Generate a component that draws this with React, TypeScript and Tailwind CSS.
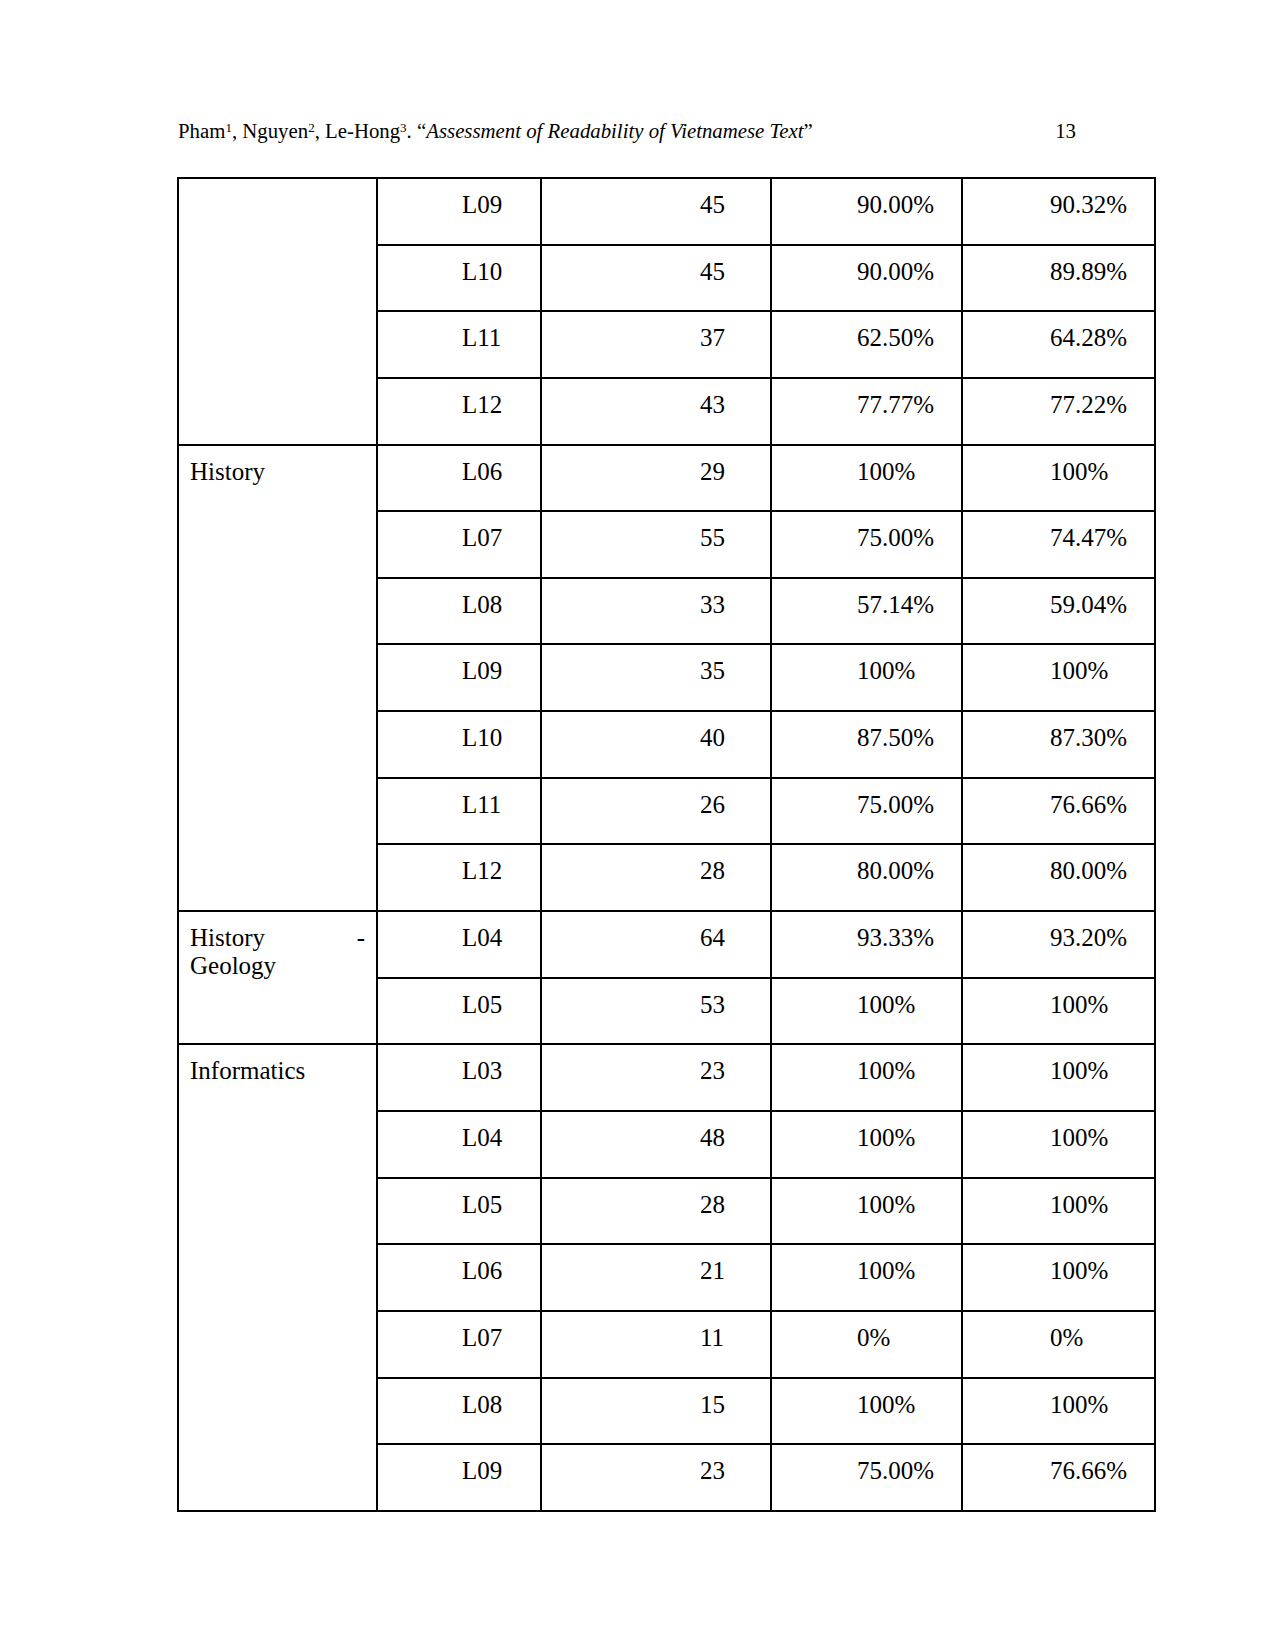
import React from "react";

type Row = [string, string, string, string];
type Group = { label: string | null; rows: Row[] };

const groups: Group[] = [
  {
    label: null,
    rows: [
      ["L09", "45", "90.00%", "90.32%"],
      ["L10", "45", "90.00%", "89.89%"],
      ["L11", "37", "62.50%", "64.28%"],
      ["L12", "43", "77.77%", "77.22%"],
    ],
  },
  {
    label: "History",
    rows: [
      ["L06", "29", "100%", "100%"],
      ["L07", "55", "75.00%", "74.47%"],
      ["L08", "33", "57.14%", "59.04%"],
      ["L09", "35", "100%", "100%"],
      ["L10", "40", "87.50%", "87.30%"],
      ["L11", "26", "75.00%", "76.66%"],
      ["L12", "28", "80.00%", "80.00%"],
    ],
  },
  {
    label: "History - Geology",
    rows: [
      ["L04", "64", "93.33%", "93.20%"],
      ["L05", "53", "100%", "100%"],
    ],
  },
  {
    label: "Informatics",
    rows: [
      ["L03", "23", "100%", "100%"],
      ["L04", "48", "100%", "100%"],
      ["L05", "28", "100%", "100%"],
      ["L06", "21", "100%", "100%"],
      ["L07", "11", "0%", "0%"],
      ["L08", "15", "100%", "100%"],
      ["L09", "23", "75.00%", "76.66%"],
    ],
  },
];

const cell = "border-2 border-black align-top pt-[12px] pb-0 pr-[4px] text-left whitespace-nowrap";

export default function App() {
  return (
    <div
      className="min-h-[1650px] w-[1275px] bg-white text-black pt-[119px] pl-[177px]"
      style={{ fontFamily: '"Liberation Serif", "Times New Roman", serif' }}
    >
      <div className="flex w-[899px] justify-between pl-[1px] text-[20.8px] leading-[24px] h-[24px]">
        <div className="whitespace-nowrap">
          Pham<sup className="text-[13px]">1</sup>, Nguyen<sup className="text-[13px]">2</sup>, Le-Hong
          <sup className="text-[13px]">3</sup>. “<i>Assessment of Readability of Vietnamese Text</i>”
        </div>
        <div>13</div>
      </div>

      <table className="mt-[34px] w-[979px] table-fixed border-collapse border-2 border-black text-[25px] leading-[28px]">
        <colgroup>
          <col className="w-[199px]" />
          <col className="w-[164px]" />
          <col className="w-[230px]" />
          <col className="w-[191px]" />
          <col className="w-[193px]" />
        </colgroup>
        <tbody>
          {groups.map((g, gi) =>
            g.rows.map((r, ri) => (
              <tr key={`${gi}-${ri}`} className="h-[66.65px]">
                {ri === 0 && (
                  <td
                    rowSpan={g.rows.length}
                    className="border-2 border-black align-top pt-[12px] pl-[11px] pr-[11px] text-justify"
                  >
                    {g.label === "History - Geology" ? (
                      <div>
                        <div className="flex justify-between">
                          <span>History</span>
                          <span>-</span>
                        </div>
                        <div>Geology</div>
                      </div>
                    ) : (
                      g.label
                    )}
                  </td>
                )}
                <td className={`${cell} pl-[84px]`}>{r[0]}</td>
                <td className={`${cell} pl-[158px]`}>{r[1]}</td>
                <td className={`${cell} pl-[85px]`}>{r[2]}</td>
                <td className={`${cell} pl-[87px]`}>{r[3]}</td>
              </tr>
            ))
          )}
        </tbody>
      </table>
    </div>
  );
}
